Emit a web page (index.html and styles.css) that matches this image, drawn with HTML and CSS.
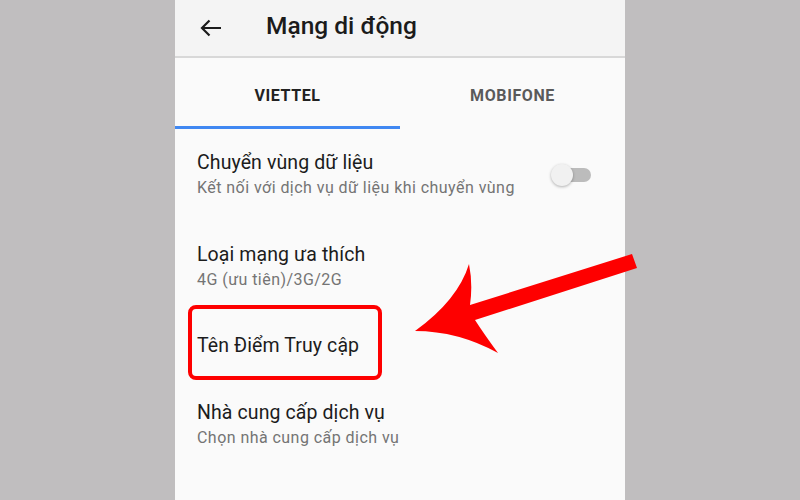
FILE: index.html
```html
<!DOCTYPE html>
<html lang="vi">
<head>
<meta charset="utf-8">
<title>Mạng di động</title>
<link rel="stylesheet" href="styles.css">
</head>
<body>
<div class="stage">
  <div class="phone">
    <header class="appbar">
      <svg class="back" width="22" height="18" viewBox="0 0 22 18" aria-hidden="true">
        <path d="M21 9H2.5M9.5 1.5L2 9l7.5 7.5" fill="none" stroke="#1c1c1c" stroke-width="2.2"/>
      </svg>
      <h1 class="title">Mạng di động</h1>
    </header>
    <nav class="tabs">
      <div class="tab active">VIETTEL</div>
      <div class="tab">MOBIFONE</div>
    </nav>
    <ul class="list">
      <li class="item">
        <div class="texts">
          <div class="primary">Chuyển vùng dữ liệu</div>
          <div class="secondary">Kết nối với dịch vụ dữ liệu khi chuyển vùng</div>
        </div>
        <div class="switch"><span class="track"></span><span class="thumb"></span></div>
      </li>
      <li class="item">
        <div class="texts">
          <div class="primary">Loại mạng ưa thích</div>
          <div class="secondary">4G (ưu tiên)/3G/2G</div>
        </div>
      </li>
      <li class="item single">
        <div class="texts">
          <div class="primary">Tên Điểm Truy cập</div>
        </div>
      </li>
      <li class="item">
        <div class="texts">
          <div class="primary">Nhà cung cấp dịch vụ</div>
          <div class="secondary">Chọn nhà cung cấp dịch vụ</div>
        </div>
      </li>
    </ul>
  </div>
  <div class="highlight"></div>
  <svg class="pointer" width="800" height="500" viewBox="0 0 800 500" aria-hidden="true">
    <path d="M632 254 L470 305 Q473 284 469 264 Q458 300 415 331 Q458 331 498 353 Q484 334 475 320 L637 268 Z" fill="#fe0000"/>
  </svg>
</div>
</body>
</html>
```

FILE: styles.css
```css
* { box-sizing: border-box; }
html, body { margin: 0; padding: 0; }
body {
  width: 800px;
  height: 500px;
  overflow: hidden;
  background: #c0bebf;
  font-family: Roboto, "Noto Sans", "Liberation Sans", sans-serif;
}
.stage {
  position: relative;
  width: 800px;
  height: 500px;
  display: flex;
  justify-content: center;
}
.phone {
  width: 450px;
  height: 500px;
  background: #fafafa;
  display: flex;
  flex-direction: column;
}
.appbar {
  height: 58px;
  flex: none;
  display: flex;
  align-items: center;
  background: #f4f4f4;
  border-bottom: 2px solid #d8d8d8;
  padding-left: 25px;
}
.back { display: block; margin-top: 0; }
.title {
  margin: 0 0 0 44px;
  font-size: 24.5px;
  font-weight: 500;
  color: #1b1b1b;
  padding-bottom: 6px;
}
.tabs {
  height: 71px;
  flex: none;
  display: grid;
  grid-template-columns: 1fr 1fr;
}
.tab {
  display: flex;
  align-items: center;
  justify-content: center;
  font-size: 16px;
  font-weight: 700;
  letter-spacing: 0.6px;
  color: #5a5a5a;
  padding-top: 6px;
  border-bottom: 3px solid transparent;
}
.tab.active {
  color: #222;
  border-bottom-color: #4088f2;
}
.list {
  list-style: none;
  margin: 0;
  padding: 0;
}
.item {
  display: flex;
  align-items: center;
  padding: 21px 34px 21px 22px;
  min-height: 92px;
}
.item.single { min-height: 66px; padding-top: 0; padding-bottom: 0; }
.texts { flex: 1; }
.primary {
  font-size: 19.5px;
  letter-spacing: 0.1px;
  line-height: 26px;
  color: #1c1c1c;
}
.secondary {
  font-size: 16px;
  letter-spacing: 0.45px;
  line-height: 24px;
  color: #747474;
}
.switch {
  position: relative;
  width: 40px;
  height: 22px;
  flex: none;
}
.track {
  position: absolute;
  left: 8px;
  top: 4px;
  width: 32px;
  height: 14px;
  border-radius: 7px;
  background: #bcbcbc;
}
.thumb {
  position: absolute;
  left: 0;
  top: 0;
  width: 22px;
  height: 22px;
  border-radius: 50%;
  background: #f1f1f1;
  box-shadow: 0 1px 3px rgba(0,0,0,0.3);
}
.highlight {
  position: absolute;
  left: 188px;
  top: 305px;
  width: 194px;
  height: 75px;
  border: 4px solid #fe0000;
  border-radius: 8px;
}
.pointer {
  position: absolute;
  left: 0;
  top: 0;
}
```
